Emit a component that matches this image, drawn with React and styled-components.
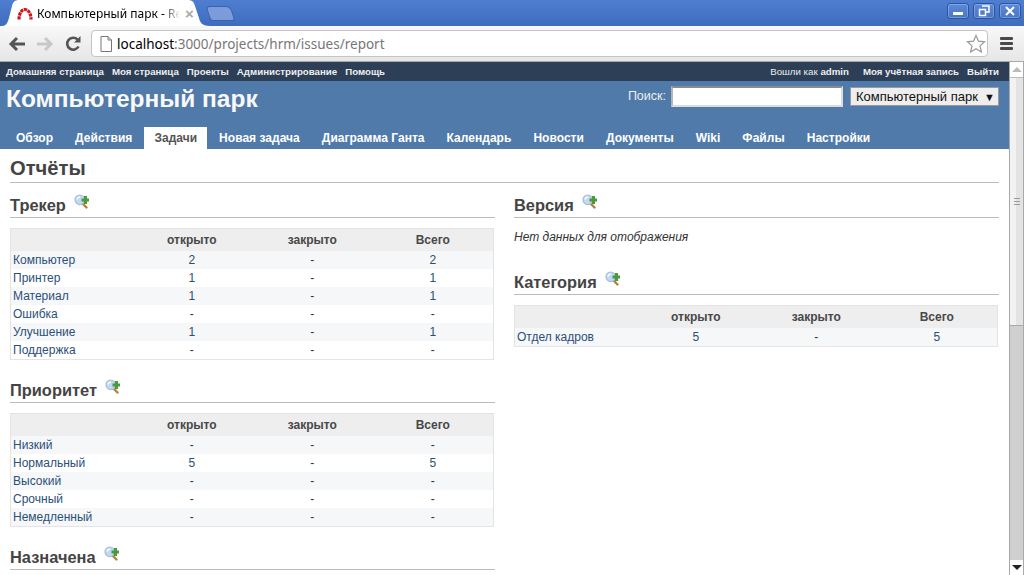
import React from "react";
import styled, { createGlobalStyle } from "styled-components";

const tracker = [
  ["Компьютер", "2", "-", "2"],
  ["Принтер", "1", "-", "1"],
  ["Материал", "1", "-", "1"],
  ["Ошибка", "-", "-", "-"],
  ["Улучшение", "1", "-", "1"],
  ["Поддержка", "-", "-", "-"],
];
const priority = [
  ["Низкий", "-", "-", "-"],
  ["Нормальный", "5", "-", "5"],
  ["Высокий", "-", "-", "-"],
  ["Срочный", "-", "-", "-"],
  ["Немедленный", "-", "-", "-"],
];
const category = [["Отдел кадров", "5", "-", "5"]];
const tabs = ["Обзор", "Действия", "Задачи", "Новая задача", "Диаграмма Ганта", "Календарь", "Новости", "Документы", "Wiki", "Файлы", "Настройки"];
const leftMenu = ["Домашняя страница", "Моя страница", "Проекты", "Администрирование", "Помощь"];

const ZoomIcon = () => (
  <IconWrap width="15" height="15" viewBox="0 0 15 15">
    <path d="M8.500 9.500l4 4" stroke="#b5803f" strokeWidth="2.400" strokeLinecap="round" />
    <circle cx="5.800" cy="5.800" r="4.800" fill="#c4d9ef" stroke="#a3bdd8" strokeWidth="1.200" />
    <path d="M3 5.500a3 3 0 0 1 3-2.400" fill="none" stroke="#fff" strokeWidth="1.200" />
    <path d="M7.500 4.500h2.500V2h3v2.500h2v3h-2V10h-3V7.500H7.500z" fill="#4a9a3c" />
  </IconWrap>
);

const ReportTable = ({ rows }) => (
  <Table>
    <thead>
      <tr>
        <Th />
        <Th>открыто</Th>
        <Th>закрыто</Th>
        <Th>Всего</Th>
      </tr>
    </thead>
    <tbody>
      {rows.map((r, i) => (
        <Row key={r[0]} $odd={i % 2 === 0}>
          <NameCell><a>{r[0]}</a></NameCell>
          <Cell $link={r[1] !== "-"}>{r[1]}</Cell>
          <Cell>{r[2]}</Cell>
          <Cell $link={r[3] !== "-"}>{r[3]}</Cell>
        </Row>
      ))}
    </tbody>
  </Table>
);

const Section = ({ title, children }) => (
  <Block>
    <SectionTitle>
      {title}
      <ZoomIcon />
    </SectionTitle>
    {children}
  </Block>
);

export default function App() {
  return (
    <Window>
      <Global />
      <TabStrip>
        <Tab>
          <TabShape width="208" height="26" viewBox="0 0 208 26">
            <path d="M0 26C5 26 6 22 8 14L10 6C11 2 13 0 17 0H186C190 0 192 2 193 6L197 18C198 23 201 26 208 26Z" fill="#fff" />
          </TabShape>
          <Favicon width="16" height="14" viewBox="0 0 16 14">
            <path d="M2 12.500C2 6 5 2.500 8 2.500S14 6 14 12.500" fill="none" stroke="#c9171e" strokeWidth="3.200" strokeDasharray="3.200 .7" />
          </Favicon>
          <TabTitle>Компьютерный парк - Re</TabTitle>
          <TabClose>×</TabClose>
        </Tab>
        <NewTab />
        <WindowButtons>
          <WinButton>
            <svg width="12" height="10" viewBox="0 0 12 10"><rect x="1" y="6" width="10" height="3" fill="#fff" /></svg>
          </WinButton>
          <WinButton>
            <svg width="12" height="12" viewBox="0 0 12 12"><path d="M4 1h7v6H8M1.500 4.500h6v6h-6z" fill="none" stroke="#fff" strokeWidth="1.500" /></svg>
          </WinButton>
          <WinButton>
            <svg width="12" height="12" viewBox="0 0 12 12"><path d="M2 2l8 8M10 2l-8 8" stroke="#fff" strokeWidth="2" /></svg>
          </WinButton>
        </WindowButtons>
      </TabStrip>
      <Toolbar>
        <NavIcon width="18" height="16" viewBox="0 0 18 16">
          <path d="M9 2L3 8l6 6M3 8h14" fill="none" stroke="#555" strokeWidth="3" />
        </NavIcon>
        <NavIcon width="18" height="16" viewBox="0 0 18 16">
          <path d="M9 2l6 6-6 6M15 8H1" fill="none" stroke="#c8c8c8" strokeWidth="3" />
        </NavIcon>
        <NavIcon width="18" height="18" viewBox="0 0 18 18">
          <path d="M14.500 11.500A6 6 0 1 1 13.500 4.500" fill="none" stroke="#555" strokeWidth="2.600" />
          <path d="M10 7.500h6.500V1z" fill="#555" />
        </NavIcon>
        <Omnibox>
          <svg width="14" height="16" viewBox="0 0 14 16">
            <path d="M2 .5h7l3.500 3.500v11.500H2zM9 .5V4h3.500" fill="#fff" stroke="#777" />
          </svg>
          <Url>localhost<UrlRest>:3000/projects/hrm/issues/report</UrlRest></Url>
          <StarIcon width="20" height="20" viewBox="0 0 20 20">
            <path d="M10 1.500l2.500 5.700 6.100.6-4.600 4.100 1.400 6.100-5.400-3.200-5.400 3.200 1.400-6.100L1.400 7.800l6.100-.6z" fill="#fff" stroke="#999" strokeWidth="1.200" />
          </StarIcon>
        </Omnibox>
        <Hamburger><i /><i /><i /></Hamburger>
      </Toolbar>
      <Viewport>
        <Page>
          <TopMenu>
            <MenuGroup>
              {leftMenu.map((m) => <MenuLink key={m}>{m}</MenuLink>)}
            </MenuGroup>
            <MenuGroup>
              <LoggedAs>Вошли как <b>admin</b></LoggedAs>
              <MenuLink>Моя учётная запись</MenuLink>
              <MenuLink>Выйти</MenuLink>
            </MenuGroup>
          </TopMenu>
          <Header>
            <HeaderRow>
              <ProjectTitle>Компьютерный парк</ProjectTitle>
              <SearchBox>
                <SearchLabel>Поиск:</SearchLabel>
                <SearchInput />
                <ProjectSelect>Компьютерный парк<Caret>▼</Caret></ProjectSelect>
              </SearchBox>
            </HeaderRow>
            <MainMenu>
              {tabs.map((t) => <MainTab key={t} $selected={t === "Задачи"}>{t}</MainTab>)}
            </MainMenu>
          </Header>
          <Content>
            <PageTitle>Отчёты</PageTitle>
            <Columns>
              <div>
                <Section title="Трекер"><ReportTable rows={tracker} /></Section>
                <Section title="Приоритет"><ReportTable rows={priority} /></Section>
                <Section title="Назначена" />
              </div>
              <div>
                <Section title="Версия"><NoData>Нет данных для отображения</NoData></Section>
                <Section title="Категория"><ReportTable rows={category} /></Section>
              </div>
            </Columns>
          </Content>
        </Page>
        <Scrollbar>
          <ScrollButton><UpArrow /></ScrollButton>
          <Thumb><Grip /><Grip /><Grip /></Thumb>
          <Track />
          <ScrollButton><DownArrow /></ScrollButton>
        </Scrollbar>
      </Viewport>
    </Window>
  );
}

const Global = createGlobalStyle`
  html, body { margin: 0; padding: 0; overflow: hidden; }
  body { font-family: "Liberation Sans", Arial, sans-serif; background: #fff; }
`;

const Window = styled.div`
  width: 1024px;
  height: 575px;
  display: flex;
  flex-direction: column;
  overflow: hidden;
`;

const TabStrip = styled.div`
  height: 26px;
  flex: none;
  display: flex;
  padding-left: 2px;
  background: linear-gradient(#4f7dd0, #3f6dbe);
  box-sizing: border-box;
`;

const Tab = styled.div`
  position: relative;
  width: 208px;
  height: 26px;
  padding: 6px 0 0 15px;
  box-sizing: border-box;
  display: flex;
  align-items: flex-start;
`;

const TabShape = styled.svg`
  position: absolute;
  left: 0;
  top: 0;
`;

const Favicon = styled.svg`
  position: relative;
  margin-top: 1px;
`;

const TabTitle = styled.span`
  position: relative;
  width: 143px;
  margin-left: 4px;
  font: 12px "Noto Sans", sans-serif;
  line-height: 16px;
  color: #000;
  white-space: nowrap;
  overflow: hidden;
  -webkit-mask-image: linear-gradient(90deg, #000 88%, transparent);
  mask-image: linear-gradient(90deg, #000 88%, transparent);
`;

const TabClose = styled.span`
  position: relative;
  margin-left: 5px;
  font: bold 15px "Liberation Sans", sans-serif;
  line-height: 15px;
  color: #aaa;
`;

const NewTab = styled.div`
  width: 25px;
  height: 15px;
  margin: 6px 0 0 -2px;
  background: #7b9bdb;
  border: 1px solid #3a62ad;
  border-radius: 4px 5px 3px 3px;
  transform: skewX(18deg);
  box-sizing: border-box;
`;

const WindowButtons = styled.div`
  margin-left: auto;
  display: flex;
  gap: 4px;
  padding: 3px 3px 0 0;
`;

const WinButton = styled.div`
  width: 22px;
  height: 16px;
  box-sizing: border-box;
  display: flex;
  align-items: center;
  justify-content: center;
  border: 1px solid #2c55a0;
  border-radius: 3px;
  box-shadow: inset 0 0 0 1px rgba(255, 255, 255, 0.25);
  background: linear-gradient(#5c89d8, #4a76c4);
`;

const Toolbar = styled.div`
  height: 36px;
  flex: none;
  display: flex;
  align-items: center;
  padding: 0 8px 0 8px;
  box-sizing: border-box;
  background: linear-gradient(#f8f8f8, #e6e6e6);
  border-bottom: 1px solid #a8a8a8;
`;

const NavIcon = styled.svg`
  flex: none;
  margin-right: 10px;
`;

const Omnibox = styled.div`
  width: 897px;
  height: 27px;
  margin-left: -1px;
  padding: 0 1px 0 7px;
  box-sizing: border-box;
  flex: none;
  display: flex;
  align-items: center;
  background: #fff;
  border: 1px solid #c4c4c4;
  border-radius: 4px;
`;

const Url = styled.span`
  margin-left: 4px;
  font: 13.500px "Noto Sans", sans-serif;
  color: #000;
`;

const UrlRest = styled.span`
  color: #777;
`;

const StarIcon = styled.svg`
  margin-left: auto;
`;

const Hamburger = styled.div`
  margin-left: 12px;
  width: 13px;
  display: flex;
  flex-direction: column;
  gap: 2px;
  i {
    display: block;
    height: 3px;
    background: #4a4a4a;
    border-radius: 1px;
  }
`;

const Viewport = styled.div`
  flex: 1;
  min-height: 0;
  display: flex;
`;

const Page = styled.div`
  flex: 1;
  min-width: 0;
  overflow: hidden;
  font-size: 12px;
  color: #333;
`;

const TopMenu = styled.div`
  height: 19px;
  padding: 0 10px 0 6px;
  display: flex;
  align-items: center;
  justify-content: space-between;
  background: #2c3f56;
`;

const MenuGroup = styled.div`
  display: flex;
  gap: 8px;
  align-items: center;
`;

const MenuLink = styled.a`
  font-size: 9.700px;
  font-weight: bold;
  color: #eee;
`;

const LoggedAs = styled.span`
  font-size: 9.700px;
  color: #eee;
  margin-right: 6px;
`;

const Header = styled.div`
  height: 68px;
  background: #507aaa;
  color: #f8f8f8;
  display: flex;
  flex-direction: column;
  justify-content: space-between;
`;

const HeaderRow = styled.div`
  display: flex;
  justify-content: space-between;
  padding: 4px 10px 0 6px;
`;

const ProjectTitle = styled.h1`
  margin: 0;
  font-size: 24.500px;
  line-height: 28px;
  font-weight: bold;
`;

const SearchBox = styled.div`
  display: flex;
  align-items: flex-start;
  padding-top: 1px;
`;

const SearchLabel = styled.span`
  font-size: 12.500px;
  line-height: 20px;
  color: #eee;
`;

const SearchInput = styled.div`
  width: 172px;
  height: 21px;
  margin-left: 5px;
  box-sizing: border-box;
  background: #fff;
  border: 2px solid #ddd;
  border-top-color: #8b8b8b;
  border-left-color: #b5b5b5;
`;

const ProjectSelect = styled.div`
  width: 149px;
  height: 19px;
  margin: 1px 0 0 7px;
  padding: 0 3px 0 5px;
  box-sizing: border-box;
  display: flex;
  justify-content: space-between;
  align-items: center;
  background: #eee;
  border: 1px solid #9a9a9a;
  font-size: 13px;
  color: #111;
`;

const Caret = styled.span`
  font-size: 11px;
  color: #111;
`;

const MainMenu = styled.div`
  display: flex;
  gap: 2px;
  padding-left: 6px;
`;

const MainTab = styled.a`
  height: 22px;
  padding: 0 10px;
  font-size: 12px;
  font-weight: bold;
  line-height: 22px;
  letter-spacing: 0.03px;
  color: ${(p) => (p.$selected ? "#555" : "#fff")};
  background: ${(p) => (p.$selected ? "#fff" : "transparent")};
`;

const Content = styled.div`
  padding: 8px 10px 0;
`;

const PageTitle = styled.h2`
  margin: 0 0 13px;
  padding-bottom: 2px;
  font-size: 20.200px;
  line-height: 23px;
  font-weight: bold;
  color: #444;
  border-bottom: 1px solid #bbb;
`;

const Columns = styled.div`
  display: grid;
  grid-template-columns: 485px 485px;
  column-gap: 19px;
`;

const Block = styled.div`
  margin-bottom: 21px;
`;

const SectionTitle = styled.h3`
  margin: 0 0 10px;
  height: 21px;
  font-size: 16.400px;
  line-height: 19px;
  font-weight: bold;
  color: #444;
  border-bottom: 1px solid #bbb;
  display: flex;
  align-items: flex-start;
`;

const IconWrap = styled.svg`
  margin: -2px 0 0 8px;
`;

const Table = styled.table`
  width: 484px;
  table-layout: fixed;
  border-collapse: separate;
  border-spacing: 0;
  border: 1px solid #e4e4e4;
  font-size: 12px;
`;

const Th = styled.th`
  height: 22px;
  padding: 0;
  background: #eee;
  color: #484848;
  font-size: 12px;
  font-weight: bold;
  text-align: center;
`;

const Row = styled.tr`
  height: 18px;
  background: ${(p) => (p.$odd ? "#f6f7f8" : "#fff")};
`;

const NameCell = styled.td`
  padding: 0 0 0 2px;
  color: #2b4f7a;
`;

const Cell = styled.td`
  padding: 0;
  text-align: center;
  color: ${(p) => (p.$link ? "#2b4f6e" : "#333")};
`;

const NoData = styled.p`
  margin: 0 0 27px;
  padding-top: 1px;
  font-size: 12px;
  line-height: 17px;
  font-style: italic;
  color: #333;
`;

const Scrollbar = styled.div`
  width: 15px;
  flex: none;
  display: flex;
  flex-direction: column;
  background: #f4f4f4;
  border-left: 1px solid #a9a9a9;
  border-right: 1px solid #a9a9a9;
  box-sizing: border-box;
`;

const ScrollButton = styled.div`
  height: 15px;
  flex: none;
  display: flex;
  align-items: center;
  justify-content: center;
  background: #fff;
`;

const UpArrow = styled.div`
  width: 0;
  height: 0;
  border-left: 5px solid transparent;
  border-right: 5px solid transparent;
  border-bottom: 5px solid #bbb;
`;

const DownArrow = styled.div`
  width: 0;
  height: 0;
  border-left: 5px solid transparent;
  border-right: 5px solid transparent;
  border-top: 5px solid #222;
`;

const Thumb = styled.div`
  height: 249px;
  flex: none;
  display: flex;
  flex-direction: column;
  gap: 2px;
  align-items: center;
  justify-content: center;
  background: linear-gradient(90deg, #f2f2f2 50%, #e3e3e3 50%);
  border-top: 1px solid #bbb;
  border-bottom: 1px solid #a9a9a9;
  box-sizing: border-box;
`;

const Grip = styled.div`
  width: 6px;
  height: 1px;
  background: #999;
`;

const Track = styled.div`
  flex: 1;
  background: #cfcfcf;
`;
